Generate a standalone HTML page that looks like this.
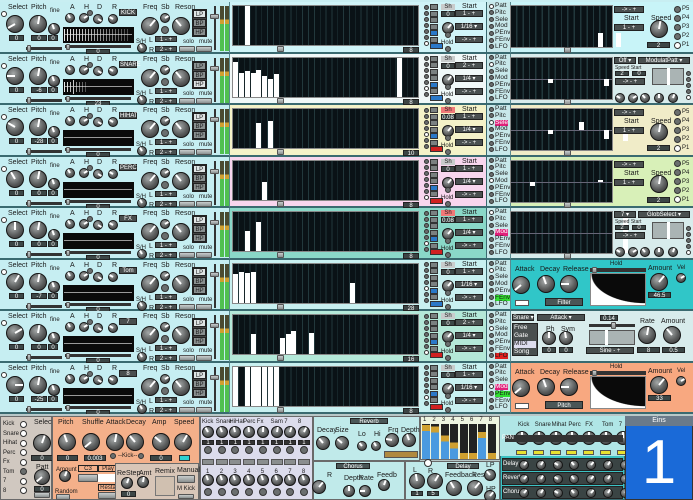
<!DOCTYPE html>
<html><head><meta charset="utf-8"><style>
html,body{margin:0;padding:0;background:#9ab;}
#r{position:relative;width:693px;height:500px;overflow:hidden;background:#c8eef2;font-family:"Liberation Sans",sans-serif;font-size:7px;color:#1a1a1a}
#r div{position:absolute;box-sizing:border-box;white-space:nowrap;line-height:1}
</style></head><body><div id="r"></div>
<script>
const R=document.getElementById('r');
function el(x,y,w,h,st,t,p){const d=document.createElement('div');d.style.cssText=`left:${x}px;top:${y}px;`+(w!=null?`width:${w}px;`:'')+(h!=null?`height:${h}px;`:'')+(st||'');if(t!=null)d.textContent=t;(p||R).appendChild(d);return d;}
function lab(x,y,t,st){return el(x,y,null,null,'font-size:7px;'+(st||''),t);}
function box(x,y,w,h,t,bg,c){return el(x,y,w,h,`background:${bg||'#3c4646'};color:${c||'#fff'};text-align:center;font-size:6px;line-height:${h}px;border:1px solid #222;`,t);}
function knob(cx,cy,r,a){const d=el(cx-r,cy-r,2*r,2*r,'border-radius:50%;background:radial-gradient(circle at 40% 35%,#a4a8a8,#5a5c5c 55%,#2a2a2a);border:1px solid #151515;');el(r-2,0,2,r-1,`background:#fff;transform-origin:50% 100%;transform:rotate(${a}deg)`,null,d);return d;}
function dot(cx,cy,r,c){return el(cx-r,cy-r,2*r,2*r,`border-radius:50%;background:${c||'#6a6e6e'};border:1px solid #333`);}
function btn(x,y,w,h,t){return el(x,y,w,h,'background:linear-gradient(#c8cccc,#8a9090);border:1px solid #555;border-radius:1px;font-size:6px;text-align:center;line-height:'+h+'px',t);}
const H=51.5,T0=2;
const names=['KICK','SNARE','HIHAT','PERC','FX','Tom','7','8'];
const pit=['0','-6','-28','0','0','-7','0','-25'];
const seqTint=['#d0f4f8','#f0f8f8','#f4f2c8','#f8d6ee','#8ad8c8','#c8f0f0','#b4e8d8','#c8f0f0'];
const rp=['#c8f4f8','#d8ecec','#f0ecc8','#d8f0b8','#d8ecec','#30c6c8','#d8ecec','#f8a880'];
const seqv=['8','8','10','8','8','28','16','8'];
const bars=[[[2,1]],[[0,.9],[1,.62],[2,.66],[3,.62],[4,.7],[5,.55],[6,.45],[7,.6],[28,1]],[[4,.65],[6,.68]],[[5,.45]],[[2,.5],[4,.75]],[[0,.75],[1,.8],[2,.78],[3,.8],[20,.5]],[[3,.5],[8,.42],[9,.5],[10,.6],[13,.55]],[[0,1],[2,1],[3,1],[4,1],[5,1],[6,1],[7,1]]];
for(let i=0;i<8;i++){
 const y=T0+i*H;
 el(0,y,230,H,'background:#c6eef2;border-bottom:2px solid #3a6a70;border-right:1px solid #5a8a90');
 dot(4,y+12,3,'#fff');
 lab(8,y+2,'Select');lab(31,y+2,'Pitch');lab(50,y+6,'fine',`font-size:6px`);
 lab(70,y+2,'A');lab(84,y+2,'H');lab(97,y+2,'D');lab(112,y+2,'R');
 knob(15,y+22,9,-120+i*30);knob(38,y+22,9,10);knob(54,y+27,6,-20);
 knob(70,y+16,5,-30);knob(84,y+16,5,60);knob(98,y+17,5,120);knob(113,y+17,5,-60);dot(90,y+11,3);
 box(9,y+33,15,6,'0');box(31,y+33,16,6,pit[i]);box(48,y+33,10,6,'0');
 el(26,y+45,36,3,'background:#333');btn(27,y+43,4,7);
 el(63,y+25,71,16,'background:#0a0a0a');
 el(64,y+32,68,1,'background:#999');
 if(i<2){el(64,y+(i==0?27:28),i==0?64:22,i==0?12:10,'background:repeating-linear-gradient(90deg,#eee 0 1px,transparent 1px 3px);-webkit-mask-image:linear-gradient(90deg,#000,rgba(0,0,0,.3));mask-image:linear-gradient(90deg,#000,rgba(0,0,0,.3))');}
 if(i==1)el(73,y+26,1,14,'background:#ccc');
 box(119,y+7,18,7,names[i],'#4a4e4e');
 el(65,y+43,66,3,'background:#333');btn(66,y+42,4,6);box(86,y+47,24,5,i==1?'23':'0');
 lab(143,y+2,'Freq');lab(161,y+2,'Sb');lab(175,y+2,'Reson');
 knob(150,y+24,9,40);knob(165,y+16,5,60);dot(165,y+28,4);knob(181,y+24,9,-40);
 lab(136,y+37,'S/H',`font-size:6px`);knob(142,y+46,5,-30);
 lab(149,y+35,'L');lab(149,y+45,'R');box(155,y+34,22,6,'1  -  +','#4a5050');box(155,y+44,22,6,'2  -  +','#4a5050');
 el(192,y+7,15,28,'background:#444;border:1px solid #222');
 ['LP','BP','HP'].forEach((t,k)=>box(193,y+8+k*9,13,8,t,k==(i==1?2:0)?'#dfe4e4':'#8a9090','#222'));
 lab(183,y+37,'solo',`font-size:6px`);lab(199,y+37,'mute',`font-size:6px`);btn(179,y+44,16,6);btn(196,y+44,16,6);
 el(214,y+4,2,44,'background:#333');btn(210,y+12,9,5);
 el(220,y+4,4,45,'background:linear-gradient(#4a4a30 0 30%,#d0a030 30% 40%,#50c050 40%)');el(225,y+4,4,45,'background:linear-gradient(#4a4a30 0 30%,#d0a030 30% 40%,#50c050 40%)');
 el(230,y,192,H,`background:${seqTint[i]};border-bottom:2px solid #3a6a70`);
 el(232,y+3,187,41,'background:repeating-linear-gradient(90deg,#0a1216 0 5px,#22383c 5px 5.84px);border:1px solid #888');
 bars[i].forEach(b=>{const h=Math.round(39*b[1]);el(233+b[0]*5.84,y+4+39-h,5,h,'background:#fff');});
 btn(277,y+44,7,6);box(403,y+45,16,6,seqv[i],'#3c4444');
 el(422,y,66,H,`background:${seqTint[i]};border-bottom:2px solid #3a6a70;border-right:2px solid #3a6a70`);
 for(let k=0;k<7;k++)dot(426,y+5+k*6,2.5,k==6-(i%3)?'#fff':'#6a6e6e');
 for(let k=0;k<6;k++)el(430,y+2+k*6.5,8,6,`background:${k==4?'#2a78c8':'#7a8080'};border:1px solid #333`);
 el(430,y+41,13,6,`background:${[0,1,5].includes(i)?'#2a78c8':'#d02020'};border:1px solid #333`);
 el(441,y+2,14,6,`background:${[2,4].includes(i)?'#f07878':'#c8cccc'};font-size:6px;text-align:center`, 'Sh');
 box(441,y+9,14,6,[2,4].includes(i)?'0.08':'0');
 knob(448,y+26,6,40);dot(448,y+33,3);lab(441,y+38,'Hold',`font-size:6px`);dot(448,y+47,3);
 lab(462,y+1,'Start');
 box(455,y+8,28,7,(i==1||i==6?'2':'1')+'  -  +','#4a5050');box(455,y+21,28,7,[0,5,7].includes(i)?'1/16 ▾':'1/4 ▾','#4a5050');box(455,y+34,28,7,'->  -  +','#4a5050');
 el(487,y,23,H,'background:#c8e8ea;border-bottom:2px solid #3a6a70');
 ['Patt','Pitc','Sele','Mod','PEnv','FEnv','LFO'].forEach((t,k)=>{dot(491,y+4+k*6.8,2.5,k==(i%4)?'#fff':'#6a6e6e');lab(495,y+1+k*6.8,t,`font-size:6.5px;`+((i==2&&k==2)||(i==4&&k==3)||(i==7&&k==3)?'background:#e0207a;color:#fff':'')+((i==5&&k==5)||(i==7&&k==4)?'background:#30e030':'')+((i==6&&k==6)?'background:#e02020':''));});
 el(510,y,183,H,`background:${rp[i]};border-bottom:2px solid #3a6a70;border-left:1px solid #5a8a90`);
 if(i<5){
  el(510,y+3,103,43,'background:repeating-linear-gradient(90deg,#0a1216 0 5px,#22383c 5px 6.4px);border:1px solid #888');
  if(i>0)el(511,y+25,101,1,'background:#667');
  btn(564,y+45,7,6);
  const mb=[[[14,.35],[17,.35]],[[6,.2],[15,.35],[17,.2]],[[15,.45],[18,.55],[11,-.4],[6,.2]],[[3,.2],[14,-.1]],[[18,1]]][i];
  mb.forEach(b=>{if(i==0||i==4){const h=Math.round(41*b[1]);el(511+b[0]*6.2,y+4+41-h,5,h,'background:#fff');}else{const h=Math.abs(Math.round(20*b[1]));el(511+b[0]*6.2,b[1]>0?y+25:y+25-h,5,h||3,'background:#fff');}});
  if(i==1||i==4){
   box(614,y+3,22,7,i==1?'Off ▾':'7 ▾','#4a5050');box(638,y+3,52,7,i==1?'ModulatPatt ▾':'GlobSelect ▾','#4a5050');
   lab(615,y+12,'Speed Start',`font-size:5px`);box(615,y+17,14,5,'2');box(632,y+17,14,5,'0');box(615,y+24,30,7,'->  -  +','#4a5050');
   el(652,y+14,32,17,'background:#aab4b4;border:1px solid #555');el(667,y+14,3,17,'background:#fff');
   [620,633,645,659,673].forEach((x,k)=>knob(x,y+44,5,[-60,60,-40,0,20][k]));
   for(let k=0;k<5;k++)dot(688,y+20+k*6,2.5,k==4?'#fff':'#6a6e6e');
  }else{
   box(614,y+4,30,7,'->  -  +','#4a5050');lab(624,y+13,'Start');box(614,y+22,30,7,'1  -  +','#4a5050');
   lab(651,y+13,'Speed');knob(659,y+27,9,10);box(647,y+40,23,6,'2');
   ['P5','P4','P3','P2','P1'].forEach((t,k)=>{dot(677,y+7+k*9,3.5,k==4?'#fff':'#6a6e6e');lab(682,y+4+k*9,t,'font-size:6px');});
  }
 }else if(i==5||i==7){
  lab(515,y+6,'Attack');lab(540,y+6,'Decay');lab(563,y+6,'Release');
  knob(521,y+25,9,-130);knob(546,y+24,9,-20);knob(569,y+24,9,-90);
  el(515,y+40,14,6,'background:#fff;border:1px solid #555');box(545,y+38,38,8,i==5?'Filter':'Pitch','#4a5656');
  el(590,y+8,56,4,'background:#333');btn(592,y+7,5,6);lab(610,y+1,'Hold',`font-size:6px`);
  el(590,y+13,56,33,'background:#0a0a0a;border:1px solid #888');
  el(591,y+14,54,31,'background:radial-gradient(ellipse 100% 95% at 100% 0%,#0a0a0a 98%,#fff 100%)');
  lab(648,y+5,'Amount');knob(659,y+22,9,40);box(648,y+32,23,6,i==5?'46.5':'33');lab(677,y+5,'Vel',`font-size:6px`);knob(681,y+18,5,60);
 }else{
  box(512,y+3,22,7,'Snare ▾','#4a5050');box(537,y+3,48,7,'Attack ▾','#4a5050');
  el(512,y+12,26,33,'background:#4a5050;border:1px solid #222');
  ['Free','Gate','MIDI','Song'].forEach((t,k)=>lab(514,y+14+k*8,t,`font-size:6.5px;color:${k==2?'#222':'#fff'};`+(k==2?'background:#dde;width:22px':'')));
  lab(546,y+15,'Ph');lab(561,y+15,'Sym');knob(549,y+27,7,0);knob(566,y+27,7,-10);box(542,y+36,14,6,'0');box(559,y+36,14,6,'0');
  box(600,y+4,18,6,'0.14');el(589,y+13,46,3,'background:#333');btn(611,y+11,5,7);
  el(589,y+19,46,15,'background:#aab4b4;border:1px solid #555');el(605,y+19,3,15,'background:#fff');
  box(586,y+36,48,7,'Sine  -  +','#4a5050');
  lab(640,y+7,'Rate');lab(661,y+7,'Amount');knob(647,y+24,9,10);knob(672,y+24,9,-40);box(637,y+36,23,6,'8');box(662,y+36,23,6,'0.5');
 }
}
const B=414;
el(0,B,693,86,'background:#b8c8c8');
el(0,B+2,52,84,'background:#d0c8c0;border:1px solid #6a6a6a');
['Kick','Snare','Hihat','Perc','Fx','Tom','7','8'].forEach((t,k)=>{lab(3,B+7+k*9.5,t,'font-size:6px');dot(23,B+10+k*9.5,3.5,k==5?'#6a6e6e':'#fff');});
lab(34,B+5,'Select');knob(42,B+29,9,20);box(31,B+41,22,6,'0');lab(36,B+50,'Patt');knob(42,B+63,8,-130);box(34,B+72,16,6,'0');btn(34,B+78,16,6);
el(52,B+2,148,84,'background:#f4b08a;border:1px solid #6a6a6a');
[['Pitch',67],['Shuffle',91],['Attack',115],['Decay',135],['Amp',161],['Speed',183]].forEach((a,k)=>{lab(a[1]-9,B+5,a[0]);knob(a[1],B+28,9,[-20,-130,10,-40,-50,30][k]);});
box(57,B+41,21,6,'0');box(84,B+41,22,6,'0.003');box(150,B+41,22,6,'0');el(179,B+41,11,6,'background:#30d0d0;border:1px solid #333');
dot(113,B+42,3);dot(141,B+42,3);lab(118,B+39,'--Kick--',`font-size:6px`);
lab(56,B+53,'Amount',`font-size:6px`);knob(65,B+62,6,20);lab(55,B+75,'Random',`font-size:6px`);btn(56,B+80,14,6);
box(78,B+51,20,7,'C3','#f4b08a','#222');btn(78,B+60,20,8);box(98,B+51,20,7,'Play','#f4b08a','#222');el(98,B+60,20,8,'background:#fff');box(98,B+70,20,7,'Resta','#f4b08a','#222');btn(98,B+78,20,7);
el(115,B+49,84,37,'background:#d8c6b8;border:1px solid #6a6a6a');
lab(117,B+56,'ReStep');lab(139,B+56,'Amt');lab(155,B+54,'Remix');lab(177,B+53,'Manual');
knob(127,B+69,6,20);knob(143,B+68,6,10);box(121,B+77,15,6,'0');el(155,B+62,20,20,'background:#d0c0b0;border:1px solid #777');btn(177,B+61,18,8);lab(177,B+72,'M Kick',`font-size:6px`);btn(178,B+80,16,5);
el(200,B+2,113,84,'background:#dcdcec;border:1px solid #6a6a6a');
['Kick','Snare','HiHat','Perc','Fx','Sam','7','8'].forEach((t,k)=>{lab(202+k*13.7,B+5,t,'font-size:6px');knob(208+k*13.7,B+18,6,-30+k*8);box(202+k*13.7,B+26,12,5,'1','#333');dot(208+k*13.7,B+36,4);el(202+k*13.7,B+45,12,6,'background:#8a8e8e;border:1px solid #555');lab(206+k*13.7,B+55,''+(k+1),'font-size:6px');knob(208+k*13.7,B+66,6,-20);dot(208+k*13.7,B+78,4);});
el(313,B+2,107,45,'background:#c0eaea;border:1px solid #6a6a6a');
box(350,B+4,38,6,'Reverb','#4a5656');lab(317,B+13,'Decay');lab(335,B+13,'Size');lab(358,B+17,'Lo');lab(374,B+17,'Hi');lab(388,B+13,'Frq');lab(401,B+13,'Depth');
knob(323,B+29,7,-40);knob(342,B+29,7,-50);knob(362,B+32,5,-40);knob(376,B+32,5,-30);knob(392,B+26,7,-80);knob(409,B+26,7,-20);el(384,B+37,34,7,'background:#b08a40;border:1px solid #555');
el(420,B+2,80,44,'background:#eef4e0;border:1px solid #6a6a6a');
[[.2,.35],[.25,.35],[.5,.7],[.7,.85],[1,1],[1,1],[.4,.55],[1,1]].forEach((m,k)=>{lab(423+k*9.4,B+3,''+(k+1),'font-size:6px');el(422+k*9.4,B+10,8,35,`background:linear-gradient(#222 0 ${m[0]*35-6}px,#d0a030 ${m[0]*35-6}px ${m[0]*35}px,#4a9ae0 ${m[0]*35}px)`);});
el(313,B+47,92,39,'background:#c0eaea;border:1px solid #6a6a6a');
box(336,B+49,34,6,'Chorus','#4a5656');lab(327,B+58,'R');lab(344,B+61,'Depth');lab(359,B+61,'Rate');lab(377,B+58,'Feedb');knob(319,B+73,7,40);knob(349,B+77,6,0);knob(365,B+77,6,-90);knob(384,B+71,6,20);
el(405,B+47,95,39,'background:#c0eaea;border:1px solid #6a6a6a');
lab(413,B+53,'L');dot(428,B+49,4,'#fff');lab(428,B+54,'R');knob(417,B+67,8,-10);knob(435,B+67,8,30);box(411,B+77,12,5,'1');box(427,B+77,12,5,'5');
box(447,B+49,32,6,'Delay','#4a5656');lab(445,B+58,'Feedback');lab(472,B+58,'Reso');lab(486,B+48,'LP');lab(486,B+72,'HP');
knob(454,B+74,8,-30);knob(475,B+74,8,40);knob(490,B+61,6,-40);knob(490,B+82,6,40);
el(500,B+2,125,84,'background:#3cc2c4;border:1px solid #3a6a70');
el(500,B+2,125,40,'background:#b0e6e6');
['Kick','Snare','Mihat','Perc','FX','Tom','7','8'].forEach((t,k)=>{lab(518+k*16.8,B+8,t,'font-size:6px');el(505,B+21,118,7,'background:#333');knob(522+k*16.8,B+24,7,0);el(516+k*16.8,B+36,11,5,'background:#e8e030;border:1px solid #555');});
lab(502,B+21,'PAN','font-size:6px;color:#fff');
['Delay','Reverb','Chorus'].forEach((t,r)=>{el(502,B+44+r*14,121,13,'background:#3a4444;border:1px solid #222');lab(503,B+47+r*14,t,'font-size:6px;color:#fff');for(let k=0;k<8;k++)knob(524+k*16.8,B+51+r*14,5,[40,30,-60,-40,40,30,60,40][k]);});
el(625,B+2,68,84,'background:#1a6ad8;border:1px solid #333');
el(625,B+2,68,10,'background:#6a7a8a;color:#fff;text-align:center;font-size:7px;line-height:10px','Eins');
el(625,B+12,68,74,'color:#fff;text-align:center;font-size:62px;line-height:74px','1');
</script></body></html>
